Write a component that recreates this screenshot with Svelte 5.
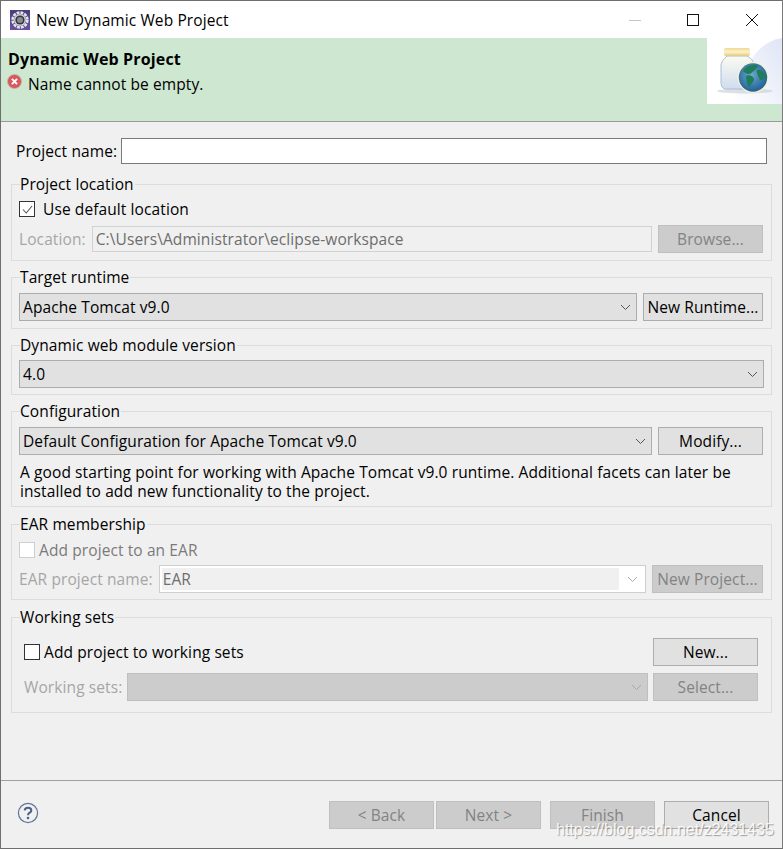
<script>
  const chevron = 'M0 0 L4.5 4.5 L9 0';
</script>

{#snippet chev(disabled = false)}
  <svg class="chev" class:off={disabled} width="11" height="7" viewBox="-1 -1 11 7"><path d={chevron} /></svg>
{/snippet}

<div class="window">
  <header class="titlebar">
    <svg class="appicon" width="20" height="20" viewBox="0 0 20 20">
      <defs>
        <linearGradient id="ibg" x1="0" y1="0" x2="0" y2="1">
          <stop offset="0" stop-color="#45407a" />
          <stop offset="1" stop-color="#6a4fa0" />
        </linearGradient>
      </defs>
      <rect width="20" height="20" fill="url(#ibg)" />
      <circle cx="10" cy="10" r="7.4" fill="none" stroke="#e4e4e4" stroke-width="2.6" stroke-dasharray="2.9 1" />
      <circle cx="10" cy="10" r="6" fill="#d0d0d4" />
      <circle cx="10" cy="10" r="4.6" fill="#34343c" />
      <circle cx="10" cy="10" r="3" fill="#8a8a92" />
    </svg>
    <span class="title">New Dynamic Web Project</span>
    <div class="winbtns">
      <svg class="min" width="12" height="12" viewBox="0 0 12 12"><path d="M0 6.5H12" stroke="#c4c4c4" /></svg>
      <svg width="12" height="12" viewBox="0 0 12 12"><rect x="0.5" y="0.5" width="11" height="11" fill="none" stroke="#111" /></svg>
      <svg width="12" height="12" viewBox="0 0 12 12"><path d="M0 0L12 12M12 0L0 12" stroke="#111" fill="none" /></svg>
    </div>
  </header>

  <section class="banner">
    <div class="banner-text">
      <h1>Dynamic Web Project</h1>
      <div class="msg">
        <svg width="15" height="15" viewBox="0 0 15 15">
          <circle cx="7.5" cy="7.5" r="7" fill="#d9585c" stroke="#c9b0b0" stroke-width="0.8" />
          <path d="M4.9 4.9L10.1 10.1M10.1 4.9L4.9 10.1" stroke="#fff" stroke-width="2" />
        </svg>
        <span>Name cannot be empty.</span>
      </div>
    </div>
    <div class="banner-image">
      <svg width="75" height="66" viewBox="0 0 75 66">
        <defs>
          <linearGradient id="bg" x1="0" y1="1" x2="1" y2="0">
            <stop offset="0" stop-color="#ffffff" />
            <stop offset="1" stop-color="#dfe5f6" />
          </linearGradient>
          <linearGradient id="lid" x1="0" y1="0" x2="0" y2="1">
            <stop offset="0" stop-color="#f2d98f" />
            <stop offset="0.5" stop-color="#fbf2cf" />
            <stop offset="1" stop-color="#e6c878" />
          </linearGradient>
          <linearGradient id="jar" x1="0" y1="0" x2="0" y2="1">
            <stop offset="0" stop-color="#fbfbf0" />
            <stop offset="1" stop-color="#d0dcef" />
          </linearGradient>
          <radialGradient id="globe" cx="0.45" cy="0.4" r="0.65">
            <stop offset="0" stop-color="#6aa9cf" />
            <stop offset="1" stop-color="#1d5a92" />
          </radialGradient>
        </defs>
        <rect width="75" height="66" fill="#fff" />
        <path d="M75 0 C54 4 40 18 26 66 H75Z" fill="url(#bg)" />
        <ellipse cx="38" cy="53" rx="28" ry="2.5" fill="#c7cbd4" opacity="0.6" />
        <path d="M20 18 H40 C46 21 47 25 47 30 V44 C47 49 42 51 37 51 H20 C15 51 14 48 14 44 V28 C14 24 17 21 20 18Z" fill="url(#jar)" stroke="#a9bcd8" />
        <rect x="17" y="10" width="26" height="8" rx="2" fill="url(#lid)" />
        <circle cx="46" cy="39.5" r="15.5" fill="#f7f1cf" />
        <circle cx="46" cy="39.5" r="14.2" fill="url(#globe)" />
        <path d="M36 33 C39 28 45 26 50 27 C52 29 48 31 47 33 C45 33 45 36 42 36 C40 36 38 35 36 33Z M39 38 C42 36 46 38 47 41 C47 44 44 45 43 49 C40 48 39 42 39 38Z M50 32 C54 31 58 35 59 39 C57 40 55 43 53 42 C52 39 49 36 50 32Z" fill="#1f7d58" />
      </svg>
    </div>
  </section>

  <main class="content">
    <div class="row name-row">
      <label for="pname">Project name:</label>
      <input id="pname" class="input grow" />
    </div>

    <fieldset class="g-location">
      <legend>Project location</legend>
      <div class="check-row">
        <span class="check">
          <svg width="15" height="15" viewBox="0 0 15 15"><path d="M3 7.5L6.2 11L12 4" fill="none" stroke="#555" stroke-width="1.1" /></svg>
        </span>
        <span>Use default location</span>
      </div>
      <div class="row loc-row">
        <span class="off-label">Location:</span>
        <div class="input off grow">C:\Users\Administrator\eclipse-workspace</div>
        <button class="btn" disabled>Browse...</button>
      </div>
    </fieldset>

    <fieldset class="g-runtime">
      <legend>Target runtime</legend>
      <div class="row runtime-row">
        <div class="combo grow">Apache Tomcat v9.0{@render chev()}</div>
        <button class="btn wide">New Runtime...</button>
      </div>
    </fieldset>

    <fieldset class="g-module">
      <legend>Dynamic web module version</legend>
      <div class="row module-row">
        <div class="combo grow">4.0{@render chev()}</div>
      </div>
    </fieldset>

    <fieldset class="g-config">
      <legend>Configuration</legend>
      <div class="row config-row">
        <div class="combo grow">Default Configuration for Apache Tomcat v9.0{@render chev()}</div>
        <button class="btn">Modify...</button>
      </div>
      <p class="desc">A good starting point for working with Apache Tomcat v9.0 runtime. Additional facets can later be installed to add new functionality to the project.</p>
    </fieldset>

    <fieldset class="g-ear">
      <legend>EAR membership</legend>
      <div class="check-row ear-check">
        <span class="check off"></span>
        <span class="off-text">Add project to an EAR</span>
      </div>
      <div class="row ear-row">
        <span class="off-label">EAR project name:</span>
        <div class="earcombo grow"><span class="earfill">EAR</span>{@render chev(true)}</div>
        <button class="btn newproj" disabled>New Project...</button>
      </div>
    </fieldset>

    <fieldset class="g-sets">
      <legend>Working sets</legend>
      <div class="row sets-top">
        <span class="check dark"></span>
        <span class="grow">Add project to working sets</span>
        <button class="btn">New...</button>
      </div>
      <div class="row sets-bottom">
        <span class="off-label">Working sets:</span>
        <div class="combo offcombo grow">{@render chev(true)}</div>
        <button class="btn" disabled>Select...</button>
      </div>
    </fieldset>
  </main>

  <footer class="footer">
    <svg class="help" width="22" height="22" viewBox="0 0 22 22">
      <circle cx="11" cy="11" r="9.6" fill="none" stroke="#5f7697" stroke-width="1.2" />
      <path d="M7.7 8.4C7.9 4.9 14.3 4.9 14.3 8.4C14.3 10.8 11 10.6 11 13.2" fill="none" stroke="#4a618a" stroke-width="2" />
      <circle cx="11" cy="16" r="1.3" fill="#4a618a" />
    </svg>
    <div class="actions">
      <button class="btn" disabled>&lt; Back</button>
      <button class="btn" disabled>Next &gt;</button>
      <button class="btn finish" disabled>Finish</button>
      <button class="btn cancel">Cancel</button>
    </div>
    <span class="watermark">https://blog.csdn.net/z2431435</span>
  </footer>
</div>

<style>
  :global(body) {
    margin: 0;
    background: #f0f0f0;
  }
  .window {
    position: relative;
    box-sizing: border-box;
    width: 783px;
    height: 849px;
    display: flex;
    flex-direction: column;
    border: 1px solid #6e6e6e;
    border-right-color: #7a7a7a;
    background: #f0f0f0;
    color: #000;
    font-family: "Open Sans", "Noto Sans", sans-serif;
    font-size: 15.5px;
    letter-spacing: 0.1px;
    line-height: 20px;
    overflow: hidden;
  }
  .titlebar {
    height: 37px;
    flex: none;
    background: #fff;
    display: flex;
    align-items: center;
    padding-left: 9px;
  }
  .appicon { flex: none; }
  .title { margin-left: 6px; flex: 1; }
  .winbtns {
    display: flex;
    align-items: center;
    gap: 47px;
    padding-right: 24px;
  }
  .winbtns .min { margin-right: -1px; }
  .banner {
    flex: none;
    box-sizing: border-box;
    height: 84px;
    background: #cde7d0;
    border-bottom: 1px solid #9a9a9a;
    display: flex;
    justify-content: space-between;
    align-items: flex-start;
  }
  .banner-text { padding: 11px 0 0 7px; }
  h1 {
    margin: 0;
    font-size: 16px;
    font-weight: 700;
    letter-spacing: 0.15px;
    line-height: 20px;
  }
  .msg {
    display: flex;
    align-items: flex-start;
    margin-top: 5px;
    margin-left: -1px;
    gap: 6px;
  }
  .msg svg { flex: none; }
  .banner-image {
    width: 75px;
    height: 66px;
  }
  .banner-image svg { display: block; }
  .content {
    flex: none;
    box-sizing: border-box;
    padding: 16px 10px 0;
  }
  .row {
    display: flex;
    align-items: center;
    gap: 6px;
  }
  .grow { flex: 1; min-width: 0; }
  .name-row { padding: 0 5px 0 5px; gap: 4px; }
  .input {
    box-sizing: border-box;
    height: 26px;
    background: #fff;
    border: 1px solid #7a7a7a;
    padding: 0 3px;
    font: inherit;
    outline: none;
    display: flex;
    align-items: center;
  }
  .input.off {
    background: #f0f0f0;
    border-color: #d2d2d2;
    color: #6d6d6d;
  }
  fieldset {
    box-sizing: border-box;
    margin: 6px 0 0;
    padding: 0 8px 0 7px;
    border: 1px solid #dcdcdc;
    min-width: 0;
  }
  legend {
    padding: 0 1px 0 0;
    margin-left: 1px;
    height: 20px;
  }
  .g-location { margin-top: 10px; height: 87px; }
  .g-runtime { height: 62px; }
  .g-module { height: 60px; }
  .g-config { height: 106px; margin-top: 6px; }
  .g-ear { height: 86px; margin-top: 7px; }
  .g-sets { height: 106px; margin-top: 7px; }
  .check-row {
    display: flex;
    align-items: center;
    gap: 8px;
    margin-top: 6px;
    height: 18px;
  }
  .check {
    flex: none;
    box-sizing: border-box;
    width: 16px;
    height: 16px;
    background: #fff;
    border: 1px solid #333;
    display: inline-block;
  }
  .check svg { display: block; }
  .check.off { border-color: #cfcfcf; }
  .ear-check { gap: 4px; margin-top: 7px; height: 17px; }
  .off-text { color: #7b7b7b; }
  .off-label { color: #a6a6a6; flex: none; }
  .loc-row { margin-top: 7px; }
  .runtime-row { margin-top: 6px; }
  .module-row { margin-top: 5px; margin-right: -1px; }
  .config-row { margin-top: 6px; }
  .combo {
    box-sizing: border-box;
    height: 28px;
    background: #e1e1e1;
    border: 1px solid #adadad;
    padding: 0 0 0 3px;
    display: flex;
    align-items: center;
    justify-content: space-between;
    position: relative;
  }
  .chev {
    flex: none;
    margin-right: 5px;
  }
  .chev path {
    fill: none;
    stroke: #555;
    stroke-width: 1;
  }
  .chev.off path { stroke: #a8a8a8; }
  .offcombo {
    background: #cccccc;
    border-color: #bfbfbf;
    justify-content: flex-end;
  }
  .btn {
    flex: none;
    box-sizing: border-box;
    width: 105px;
    height: 28px;
    padding: 0;
    background: #e1e1e1;
    border: 1px solid #adadad;
    color: #000;
    font: inherit;
    letter-spacing: inherit;
    display: flex;
    align-items: center;
    justify-content: center;
  }
  .btn:disabled {
    background: #cccccc;
    border-color: #bfbfbf;
    color: #838383;
  }
  .btn.wide { width: 120px; }
  .btn.newproj { width: 111px; }
  .desc {
    margin: 8px 0 0;
    line-height: 19px;
    padding-left: 1px;
  }
  .ear-row { margin-top: 7px; }
  .earcombo {
    box-sizing: border-box;
    height: 28px;
    background: #fff;
    border: 1px solid #cfcfcf;
    padding: 2px 0 2px 2px;
    display: flex;
    align-items: center;
    color: #6d6d6d;
  }
  .earfill {
    flex: 1;
    align-self: stretch;
    background: #f0f0f0;
    display: flex;
    align-items: center;
    padding-left: 1px;
    margin-right: 0;
  }
  .earcombo .chev { margin: 0 7px 0 8px; }
  .sets-top {
    margin-top: 11px;
    padding: 0 5px;
    gap: 4px;
  }
  .sets-bottom {
    margin-top: 7px;
    padding: 0 5px;
    gap: 5px;
  }
  .footer {
    flex: 1;
    border-top: 1px solid #a0a0a0;
    margin-top: 67px;
    display: flex;
    justify-content: space-between;
    align-items: flex-start;
    padding: 20px 13px 0 16px;
    position: relative;
  }
  .help { margin-top: 1px; }
  .actions { display: flex; }
  .actions .btn + .btn { margin-left: 2px; }
  .actions .finish, .actions .cancel { margin-left: 9px !important; }
  .watermark {
    position: absolute;
    left: 555px;
    top: 39px;
    font-family: "Liberation Sans", sans-serif;
    font-size: 16px;
    letter-spacing: 0;
    color: rgba(255, 255, 255, 0.9);
    text-shadow: 1px 1px 1px rgba(90, 90, 90, 0.55);
    white-space: nowrap;
  }
</style>
